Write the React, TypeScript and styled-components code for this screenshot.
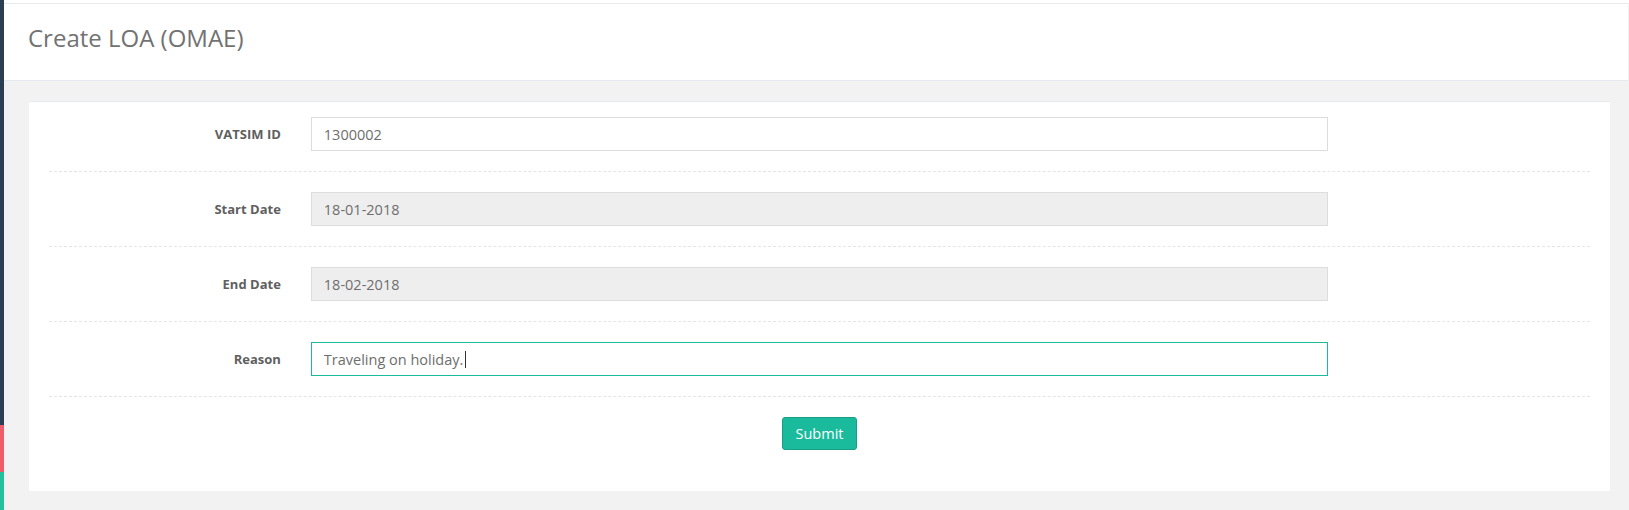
import React from "react";
import styled, { createGlobalStyle } from "styled-components";

const GlobalStyle = createGlobalStyle`
  html, body {
    margin: 0;
    padding: 0;
    background: #f2f2f2;
    font-family: "Open Sans", "Liberation Sans", sans-serif;
  }
  * {
    box-sizing: border-box;
  }
`;

const Layout = styled.div`
  display: flex;
  min-height: 510px;
`;

const SideEdge = styled.div`
  display: flex;
  flex-direction: column;
  width: 4px;
  flex-shrink: 0;
`;

const EdgeSegment = styled.div<{ $color: string; $height?: number }>`
  background: ${({ $color }) => $color};
  height: ${({ $height }) => ($height ? `${$height}px` : "auto")};
  flex-grow: ${({ $height }) => ($height ? 0 : 1)};
`;

const Main = styled.div`
  flex: 1;
  display: flex;
  flex-direction: column;
  background: #f2f2f2;
`;

const TopStrip = styled.div`
  height: 3px;
  background: #fff;
`;

const PageHeader = styled.div`
  background: #fff;
  border-top: 1px solid #e6e9ed;
  border-bottom: 1px solid #e6e9ed;
  padding: 22px 24px 30px;
  margin-right: 1px;
`;

const Title = styled.h3`
  margin: 0;
  font-size: 24px;
  line-height: 24px;
  font-weight: 400;
  color: #727272;
`;

const Content = styled.div`
  padding: 20px 19px 19px 25px;
`;

const Panel = styled.div`
  background: #fff;
  border-top: 1px solid #e6e9ed;
  padding: 15px 20px 41px;
`;

const RowFrame = styled.div`
  margin: 0 0 20px;
  padding-bottom: 20px;
  border-bottom: 1px dashed #e5e5e5;
`;

const Grid = styled.div`
  display: grid;
  grid-template-columns: 2fr 8fr 2fr;
  align-items: center;
  margin: 0 -15px;
`;

const Label = styled.label`
  padding: 0 15px;
  text-align: right;
  font-size: 13px;
  font-weight: 700;
  color: #5f5f5f;
`;

const FieldCell = styled.div`
  position: relative;
  padding: 0 15px;
`;

const Input = styled.input<{ $active?: boolean }>`
  display: block;
  width: 100%;
  height: 34px;
  padding: 6px 12px;
  font-family: "Open Sans", "Liberation Sans", sans-serif;
  font-size: 14.5px;
  color: #6e6e6e;
  background: ${({ readOnly }) => (readOnly ? "#eee" : "#fff")};
  border: 1px solid ${({ $active }) => ($active ? "#1abb9c" : "#ddd")};
  border-radius: 0;
  outline: none;
  caret-color: transparent;
`;

const Caret = styled.span<{ $left: number }>`
  position: absolute;
  top: 9px;
  left: ${({ $left }) => `${$left}px`};
  width: 1px;
  height: 17px;
  background: #333;
`;

const Actions = styled.div`
  display: flex;
  justify-content: center;
`;

const SubmitButton = styled.button`
  height: 33px;
  padding: 0 13px;
  font-family: "Open Sans", "Liberation Sans", sans-serif;
  font-size: 14.5px;
  color: #fff;
  background: #1abb9c;
  border: 1px solid #169f85;
  border-radius: 3px;
  cursor: pointer;
`;

interface FieldProps {
  label: string;
  value: string;
  readOnly?: boolean;
  active?: boolean;
  caretAt?: number;
}

const Field: React.FC<FieldProps> = ({ label, value, readOnly, active, caretAt }) => (
  <RowFrame>
    <Grid>
      <Label>{label}</Label>
      <FieldCell>
        <Input defaultValue={value} readOnly={readOnly} $active={active} />
        {caretAt !== undefined && <Caret $left={caretAt} />}
      </FieldCell>
    </Grid>
  </RowFrame>
);

const fields: FieldProps[] = [
  { label: "VATSIM ID", value: "1300002" },
  { label: "Start Date", value: "18-01-2018", readOnly: true },
  { label: "End Date", value: "18-02-2018", readOnly: true },
  { label: "Reason", value: "Traveling on holiday.", active: true, caretAt: 169 },
];

const App: React.FC = () => {
  return (
    <>
      <GlobalStyle />
      <Layout>
        <SideEdge>
          <EdgeSegment $color="#2a3f54" />
          <EdgeSegment $color="#ef5b6b" $height={47} />
          <EdgeSegment $color="#26c09f" $height={38} />
        </SideEdge>
        <Main>
          <TopStrip />
          <PageHeader>
            <Title>Create LOA (OMAE)</Title>
          </PageHeader>
          <Content>
            <Panel>
              {fields.map((f) => (
                <Field key={f.label} {...f} />
              ))}
              <Actions>
                <SubmitButton type="button">Submit</SubmitButton>
              </Actions>
            </Panel>
          </Content>
        </Main>
      </Layout>
    </>
  );
};

export default App;
